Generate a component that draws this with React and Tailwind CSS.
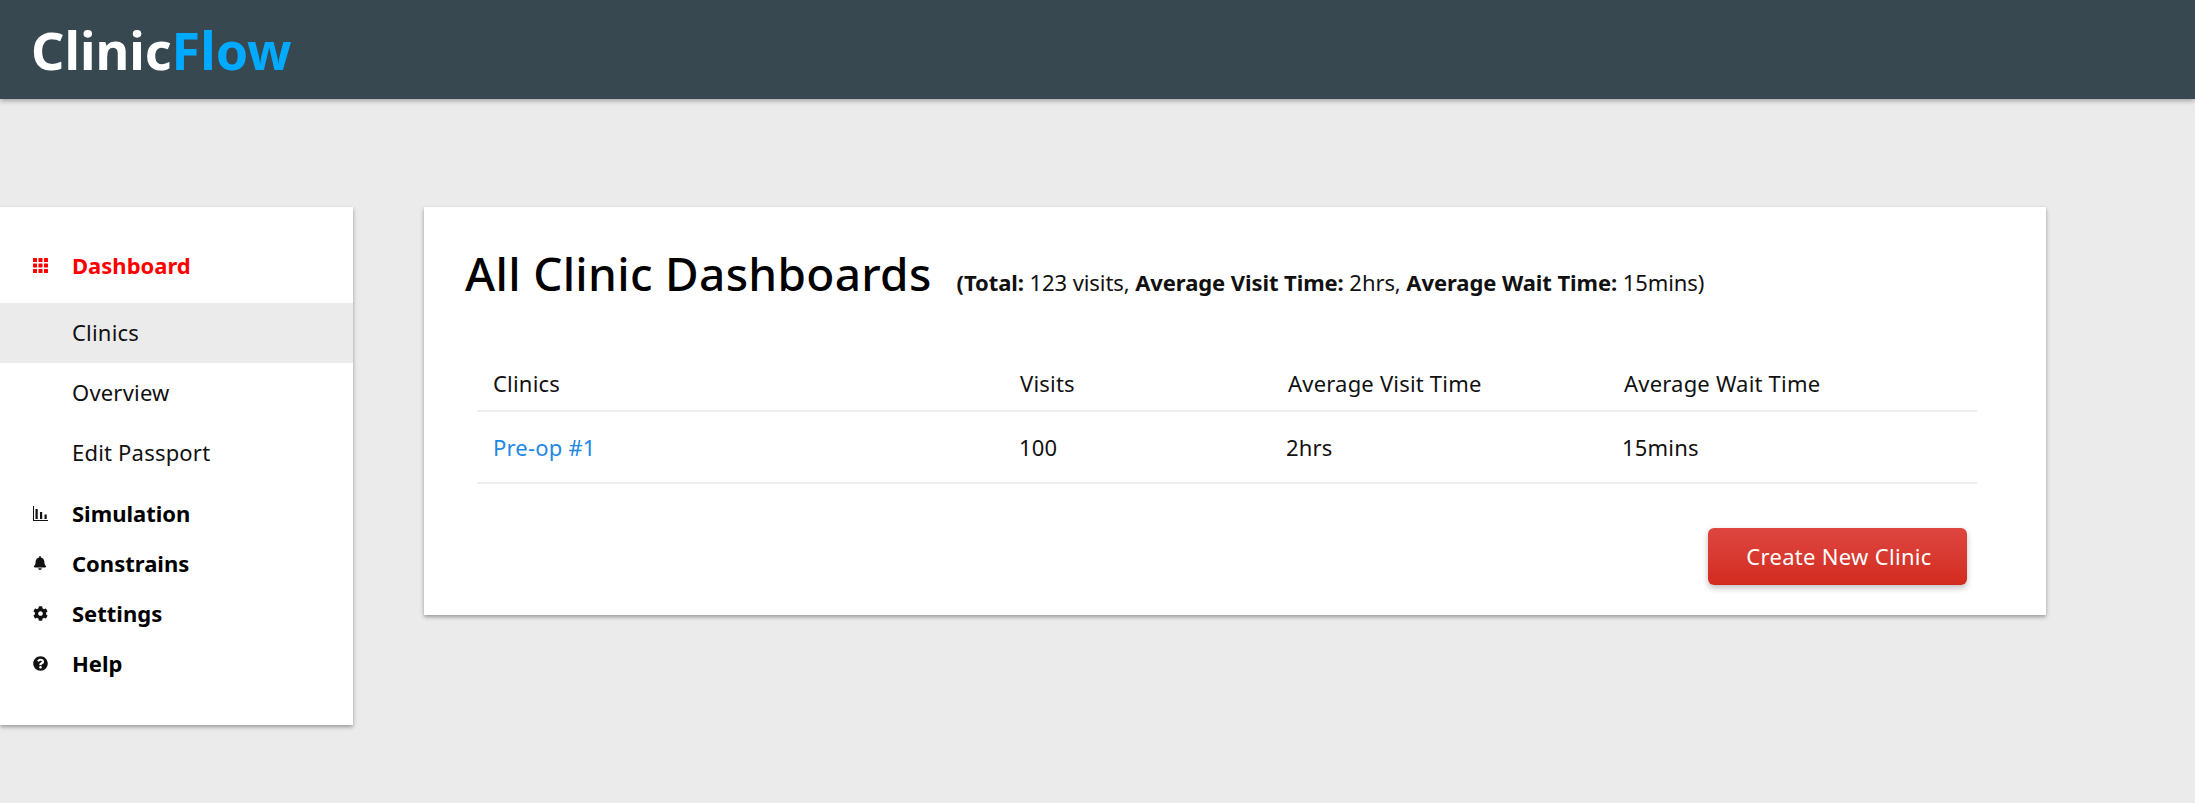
import React from "react";
import { FaBell, FaCog, FaQuestionCircle } from "react-icons/fa";

const font = "font-['Noto_Sans','Open_Sans',sans-serif]";

const GridIcon = () => (
  <svg width="15" height="15" viewBox="0 0 15 15" fill="#ff0000">
    {[0, 5.5, 11].map((y) =>
      [0, 5.5, 11].map((x) => <rect key={`${x}-${y}`} x={x} y={y} width="4" height="4" rx="0.5" />)
    )}
  </svg>
);

const ChartIcon = () => (
  <svg width="15" height="15" viewBox="0 0 15 15" fill="#111">
    <rect x="0" y="0" width="1" height="15" />
    <rect x="0" y="14" width="15" height="1" />
    <rect x="2.5" y="3" width="2.2" height="10" />
    <rect x="7" y="6" width="2.2" height="7" />
    <rect x="11.5" y="8.5" width="2.2" height="4.5" />
  </svg>
);

const SubItem = ({ label, active }) => (
  <div className={`h-[60px] flex items-center pl-[72px] pb-[1px] text-[22px] tracking-[0.2px] text-[#111] ${active ? "bg-[#ebebeb]" : ""}`}>
    {label}
  </div>
);

const MainItem = ({ icon, label, className }) => (
  <div className={`flex items-center h-[50px] ${className || ""}`}>
    <div className="w-[72px] pl-[33px] flex items-center">{icon}</div>
    <span className="text-[22px] font-bold text-black">{label}</span>
  </div>
);

const columns = "grid grid-cols-[527px_268px_336px_1fr] border-b-2 border-[#eeeeee] tracking-[0.2px]";

export default function App() {
  return (
    <div className={`min-h-[803px] bg-[#ebebeb] ${font}`}>
      <header className="h-[99px] bg-[#384850] flex items-center pl-[31px] shadow-[0_2px_5px_rgba(0,0,0,0.3)]">
        <span className="text-[52px] font-bold text-white leading-none">
          Clinic<span className="text-[#00aaff]">Flow</span>
        </span>
      </header>

      <main className="flex items-start gap-[71px] pt-[108px]">
        {/* SIDEBAR */}
        <aside className="w-[353px] h-[518px] bg-white shadow-[0_2px_4px_rgba(0,0,0,0.35)] flex flex-col pt-[33px]">
          <MainItem icon={<GridIcon />} label={<span className="text-[#ff0000]">Dashboard</span>} />
          <div className="mt-[13px]">
            <SubItem label="Clinics" active />
            <SubItem label="Overview" />
            <SubItem label="Edit Passport" />
          </div>
          <div className="mt-[5px] flex flex-col">
            <MainItem icon={<ChartIcon />} label="Simulation" />
            <MainItem icon={<FaBell size={14} color="#111" />} label="Constrains" />
            <MainItem icon={<FaCog size={15} color="#111" />} label="Settings" />
            <MainItem icon={<FaQuestionCircle size={15} color="#111" />} label="Help" />
          </div>
        </aside>

        {/* CARD */}
        <section className="w-[1622px] h-[408px] bg-white shadow-[0_2px_4px_rgba(0,0,0,0.35)] pt-[36px] pl-[41px]">
          <div className="flex items-baseline">
            <h1 className="text-[46px] tracking-[0.3px] font-medium text-black leading-[60px]">All Clinic Dashboards</h1>
            <p className="ml-[25px] text-[22px] tracking-[-0.08px] text-[#111]">
              <b>(Total:</b> 123 visits, <b>Average Visit Time:</b> 2hrs, <b>Average Wait Time:</b> 15mins)
            </p>
          </div>

          <div className="w-[1500px] ml-[12px] mt-[40px] text-[22px] text-[#111]">
            <div className={`${columns} h-[69px] pl-[16px] pt-[24px]`}>
              <span>Clinics</span>
              <span>Visits</span>
              <span>Average Visit Time</span>
              <span>Average Wait Time</span>
            </div>
            <div className={`${columns} h-[72px] pl-[16px] pt-[1px] items-center`}>
              <a className="text-[#1e88e5]">Pre-op #1</a>
              <span className="-ml-[1px]">100</span>
              <span className="-ml-[2px]">2hrs</span>
              <span className="-ml-[2px]">15mins</span>
            </div>
          </div>

          <div className="w-[1502px] flex justify-end mt-[44px]">
            <button className="w-[259px] h-[57px] rounded-[6px] pl-[3px] text-[22px] tracking-[0.3px] text-white bg-gradient-to-b from-[#de4640] to-[#d32a1e] shadow-[0_3px_6px_rgba(0,0,0,0.25)]">
              Create New Clinic
            </button>
          </div>
        </section>
      </main>
    </div>
  );
}
